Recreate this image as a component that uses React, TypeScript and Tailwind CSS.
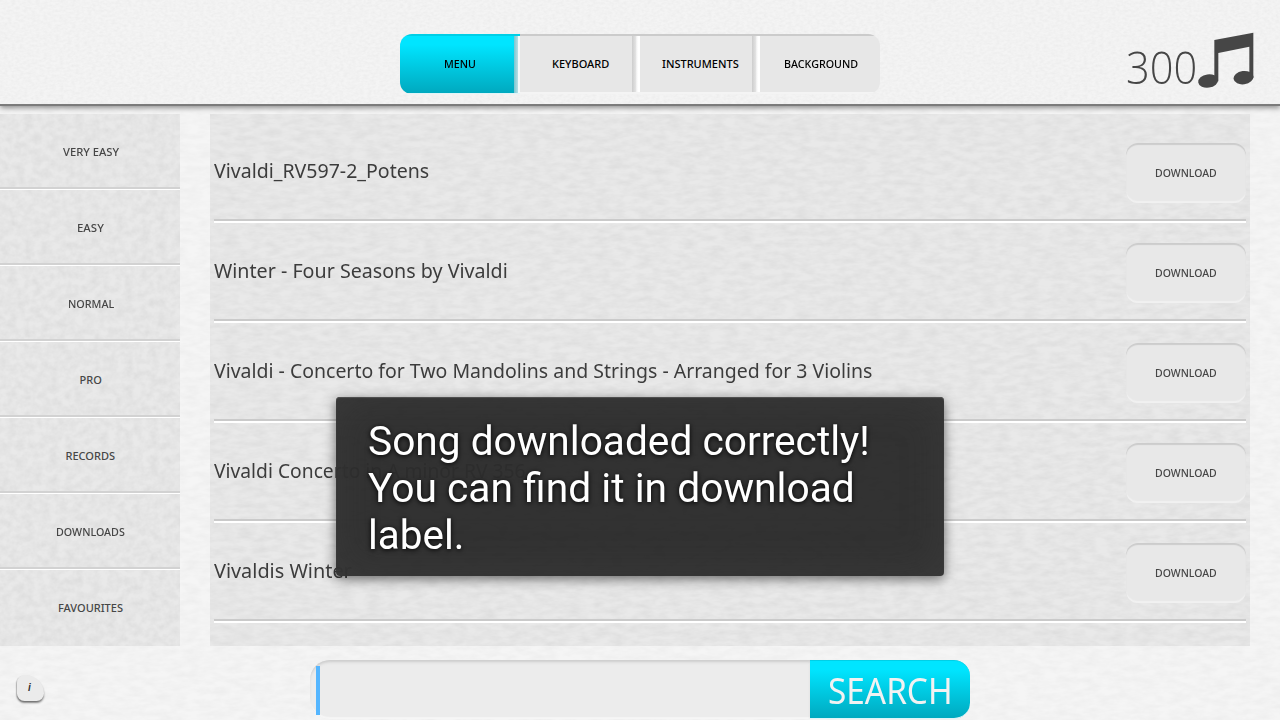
import React, { useLayoutEffect, useRef, useState } from 'react';

// Types
interface Label {
  text: string;
  width: number;
}

const tabs: Label[] = [
  { text: 'KEYBOARD', width: 57 },
  { text: 'INSTRUMENTS', width: 77 },
  { text: 'BACKGROUND', width: 74 },
];

const categories: Label[] = [
  { text: 'VERY EASY', width: 56 },
  { text: 'EASY', width: 27 },
  { text: 'NORMAL', width: 46 },
  { text: 'PRO', width: 22 },
  { text: 'RECORDS', width: 50 },
  { text: 'DOWNLOADS', width: 69 },
  { text: 'FAVOURITES', width: 65 },
];

const songs: Label[] = [
  { text: 'Vivaldi_RV597-2_Potens', width: 215 },
  { text: 'Winter - Four Seasons by Vivaldi', width: 294 },
  { text: 'Vivaldi - Concerto for Two Mandolins and Strings - Arranged for 3 Violins', width: 658 },
  { text: 'Vivaldi Concerto in A minor RV 356', width: 312 },
  { text: 'Vivaldis Winter', width: 138 },
];

// Components

// Squeezes or stretches a single line of text to a given width
const FitText = ({ text, width }: Label) => {
  const ref = useRef<HTMLSpanElement>(null);
  const [scale, setScale] = useState(1);

  useLayoutEffect(() => {
    if (ref.current) setScale(width / ref.current.offsetWidth);
  }, [text, width]);

  return (
    <span className="flex" style={{ width }}>
      <span
        ref={ref}
        className="inline-block shrink-0 origin-left whitespace-nowrap"
        style={{ transform: `scaleX(${scale})` }}
      >
        {text}
      </span>
    </span>
  );
};

// Paper texture laid over the parent's background
const Paper = ({ id, frequency, strength }: { id: string; frequency: string; strength: number }) => (
  <svg className="pointer-events-none absolute inset-0 h-full w-full" aria-hidden="true">
    <filter id={id} x="0" y="0" width="100%" height="100%" colorInterpolationFilters="sRGB">
      <feTurbulence type="fractalNoise" baseFrequency={frequency} numOctaves="3" seed="4" />
      <feColorMatrix values={`0 0 0 0 0.35  0 0 0 0 0.35  0 0 0 0 0.35  ${strength} 0 0 0 ${-strength * 0.3}`} />
    </filter>
    <rect width="100%" height="100%" filter={`url(#${id})`} />
  </svg>
);

const MusicNote = () => (
  <svg className="h-[57px] w-[57px] fill-[#464646]" viewBox="290 36 171 171">
    <path d="M342 60 L459 38 V174 H447 V80 L354 99 V184 H342 Z" />
    <ellipse cx="323.5" cy="183" rx="30" ry="20" transform="rotate(-8 323.5 183)" />
    <ellipse cx="429.5" cy="173" rx="30" ry="20" transform="rotate(-8 429.5 173)" />
  </svg>
);

const Header = () => (
  <header className="relative z-10 flex h-[106px] justify-center border-b-2 border-[#7b7b7b] bg-[#f4f4f4] pt-[34px] shadow-[0_2px_5px_rgba(0,0,0,0.4)]">
    <Paper id="paper-header" frequency="0.25 0.4" strength={0.08} />
    <nav className="relative flex h-[60px] w-[480px] overflow-hidden rounded-xl bg-[#e7e7e7] text-[11px] font-medium text-black">
      <button className="flex w-[120px] items-center justify-center border-t-2 border-b border-t-[#00cfe6] border-b-[#dff5f8] bg-linear-to-b from-[#00e5ff] from-15% to-[#00a9bf]">
        <FitText text="MENU" width={32} />
        <span className="absolute top-[2px] left-[114px] h-[57px] w-[4px] bg-linear-to-r from-[#78c5d0] to-[#b6e0e6]" />
        <span className="absolute top-[2px] left-[118px] h-[57px] w-[2px] bg-[#f4fbfc]" />
      </button>
      {tabs.map((tab, i) => (
        <button
          key={tab.text}
          className="relative flex w-[120px] items-center justify-center border-t-2 border-b-2 border-t-[#cbcbcb] border-b-[#f4f4f4] pl-px"
        >
          <FitText {...tab} />
          {i < tabs.length - 1 && (
            <span className="absolute inset-y-0 right-0 flex">
              <span className="w-[4px] bg-linear-to-r from-[#cdcdcd] to-[#e4e4e4]" />
              <span className="w-[4px] bg-linear-to-r from-[#ededed] to-white to-50%" />
            </span>
          )}
        </button>
      ))}
    </nav>
    <div className="absolute top-[32px] right-[26.5px] flex text-[#464646]">
      <div className="mt-[8px] flex h-[54px] items-center font-['Open_Sans'] text-[44px] leading-none font-light">
        <FitText text="300" width={71} />
      </div>
      <MusicNote />
    </div>
  </header>
);

const Sidebar = () => (
  <aside className="relative w-[180px] bg-[#e9e9e9]">
    <Paper id="paper-side" frequency="0.12 0.14" strength={0.14} />
    <ul className="relative">
      {categories.map((category, i) => (
        <li
          key={category.text}
          className="relative flex h-[76px] items-center justify-center pl-px text-[11px] font-medium text-[#464646]"
        >
          <FitText {...category} />
          {i < categories.length - 1 && (
            <span className="absolute inset-x-0 bottom-0 h-[3px] border-t-2 border-[#d2d2d2] bg-white" />
          )}
        </li>
      ))}
    </ul>
  </aside>
);

const SongRow = ({ song }: { song: Label }) => (
  <li className="flex h-[100px] flex-col justify-end">
    <div className="flex h-[76px] items-start justify-between">
      <div className="flex h-[56px] items-center text-[20px] text-[#3c3c3c]">
        <FitText {...song} />
      </div>
      <button className="flex h-[60px] w-[120px] items-center justify-center rounded-xl bg-[#e8e8e8] text-[11px] font-medium text-[#464646] shadow-[inset_0_2px_1px_#cccccc,inset_0_-2px_1px_#f1f1f1]">
        <FitText text="DOWNLOAD" width={62} />
      </button>
    </div>
    <div className="h-[4px] border-t-2 border-[#cacaca] bg-white" />
  </li>
);

const SongList = () => (
  <main className="relative w-[1040px] bg-[#e9e9e9] px-1 pt-[9px]">
    <Paper id="paper-list" frequency="0.07 0.18" strength={0.13} />
    <ul className="relative">
      {songs.map((song) => (
        <SongRow key={song.text} song={song} />
      ))}
    </ul>
  </main>
);

const SearchBar = () => (
  <div className="flex h-[59px] w-[660px] text-[36px]">
    <div className="flex w-[500px] items-center rounded-l-[20px] bg-[#ececec] pl-[6px] shadow-[inset_0_3px_3px_-1px_#cbcbcb,inset_0_-2px_1px_#f6f6f6]">
      <span className="mt-[2px] h-[49px] w-[4px] bg-[#55b6ff]" />
    </div>
    <button className="flex w-[160px] items-center justify-center rounded-r-2xl border-t border-b border-t-[#00cfe6] border-b-[#dff5f8] bg-linear-to-b from-[#00e5ff] from-15% to-[#00a9bf] pt-[3px] leading-none text-[#f2f2f2]">
      <FitText text="SEARCH" width={125} />
    </button>
  </div>
);

const InfoButton = () => (
  <button className="flex h-[26px] w-[27px] items-center justify-center rounded-[8px] rounded-tr-[20px] bg-[#ebebeb] pr-[2px] text-[10px] text-[#303030] shadow-[0_2px_2px_rgba(0,0,0,0.45),-1px_1px_1px_rgba(0,0,0,0.15)]">
    <span className="font-['Liberation_Sans'] leading-none font-bold italic">i</span>
  </button>
);

const Toast = () => (
  <div className="absolute top-[397px] left-[336px] z-20 h-[179px] w-[608px] rounded-[4px] bg-[#2b2b2b]/97 pt-[21px] pl-[32px] font-['Roboto'] text-[40px] leading-[47px] text-white shadow-[0_3px_12px_rgba(0,0,0,0.55),inset_0_0_40px_rgba(75,75,75,0.35),inset_0_1px_1px_#555555] [text-shadow:0_1px_5px_#000000]">
    <FitText text="Song downloaded correctly!" width={502} />
    <FitText text="You can find it in download" width={487} />
    <FitText text="label." width={96} />
  </div>
);

// Main App Component
const App = () => (
  <div className="relative flex h-[720px] w-[1280px] flex-col overflow-hidden bg-[#f5f5f5] font-['Noto_Sans',sans-serif]">
    <Paper id="paper-page" frequency="0.07 0.18" strength={0.08} />
    <Header />
    <div className="relative mt-[8px] flex h-[532px] gap-[30px]">
      <Sidebar />
      <SongList />
    </div>
    <footer className="relative flex flex-1 items-start pt-[14px] pl-[17px]">
      <div className="mt-[15px] mr-[266px] flex">
        <InfoButton />
      </div>
      <SearchBar />
    </footer>
    <Toast />
  </div>
);

export default App;
